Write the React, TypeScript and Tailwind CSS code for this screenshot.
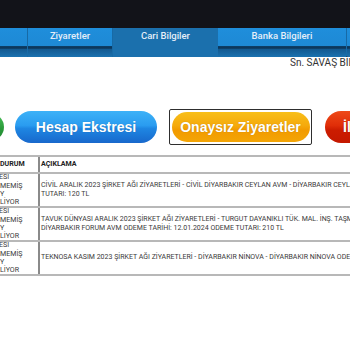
import React from "react";

const tabBg =
  "bg-[linear-gradient(to_bottom,#1f8edb_0%,#1e89d5_62%,#0b3457_64%,#0d3a60_70%,#135a91_74%,#1a72b0_100%)]";

function Tab({ w, label }: { w: string; label?: string }) {
  return (
    <div className={`${w} ${tabBg} shrink-0 border-r border-[#176aa6] flex justify-center`}>
      {label && (
        <span className="pt-[2px] text-[9.5px] leading-[11px] font-medium text-[#e4eef8]">{label}</span>
      )}
    </div>
  );
}

function Status() {
  return (
    <div className="w-[40px] shrink-0 border-r-2 border-[#8a8a8a] overflow-hidden flex flex-col justify-center text-[7.1px] leading-[8.4px] text-[#3a3a3a] whitespace-nowrap">
      <div className="-ml-[1px]">ESİ</div>
      <div>MEMİŞ</div>
      <div>Y</div>
      <div>LİYOR</div>
    </div>
  );
}

function Row({ lines }: { lines: string[] }) {
  return (
    <div className="flex h-[34px] border-b-2 border-[#b8b8b8]">
      <Status />
      <div className="flex flex-col justify-center pl-[1px] text-[7px] leading-[9.5px] text-[#3a3a3a] whitespace-nowrap">
        {lines.map((l, i) => (
          <div key={i}>{l}</div>
        ))}
      </div>
    </div>
  );
}

export default function App() {
  const btnText = "font-['Liberation_Sans',Arial,sans-serif] font-bold text-[14px] text-white [text-shadow:0_0_1px_rgba(0,0,0,0.25)]";
  return (
    <div className="w-[350px] h-[350px] overflow-hidden bg-white font-['Roboto',sans-serif]">
      <div className="h-[28px] bg-[#121319]" />
      <div className="flex h-[29px] overflow-hidden">
        <Tab w="w-[28px]" />
        <Tab w="w-[85px]" label="Ziyaretler" />
        <div className="w-[105px] shrink-0 bg-[#1b70ad] flex justify-center">
          <span className="pt-[2px] text-[9.5px] leading-[11px] font-medium text-[#e4eef8]">Cari Bilgiler</span>
        </div>
        <Tab w="w-[129px]" label="Banka Bilgileri" />
        <Tab w="w-[40px]" />
      </div>
      <div className="pl-[290px] whitespace-nowrap text-[10px] leading-[12px] text-[#333]">
        Sn. SAVAŞ BİLGİN
      </div>
      <div className="flex items-center h-[36px] mt-[40px] whitespace-nowrap">
        <div className="-ml-[136px] w-[140px] h-[28px] shrink-0 rounded-full bg-[linear-gradient(to_bottom,#4cc35a_0%,#2a9a3a_55%,#1f8530_100%)]" />
        <div
          className={`ml-[11px] w-[142px] h-[32px] shrink-0 rounded-full flex items-center justify-center bg-[linear-gradient(to_bottom,#3db2f7_0%,#2a9cf0_45%,#1e86e2_55%,#1868cc_100%)] ${btnText}`}
        >
          Hesap Ekstresi
        </div>
        <div className="ml-[12px] w-[143px] h-[36px] shrink-0 border-[1.5px] border-[#2e2e2e] rounded-[2px] flex items-center justify-center">
          <div
            className={`w-[138px] h-[30px] rounded-full flex items-center justify-center bg-[linear-gradient(to_bottom,#f8bf1a_0%,#f5aa0c_45%,#f29b00_60%,#f3a506_100%)] ${btnText} text-[#fff2d6]`}
          >
            Onaysız Ziyaretler
          </div>
        </div>
        <div
          className={`ml-[13px] w-[142px] h-[32px] shrink-0 rounded-full flex items-center pl-[18px] bg-[linear-gradient(to_bottom,#ee4a18_0%,#e02e08_45%,#cc1c00_60%,#c41800_100%)] ${btnText}`}
        >
          İletişim
        </div>
      </div>
      <div className="mt-[10px] w-[350px] overflow-hidden border-t-2 border-[#b8b8b8]">
        <div className="flex h-[17px] border-b-2 border-[#b8b8b8]">
          <div className="w-[40px] shrink-0 border-r-2 border-[#8a8a8a] flex items-center text-[7.1px] font-bold text-[#222] whitespace-nowrap">
            DURUM
          </div>
          <div className="flex items-center pl-[1px] text-[7.1px] font-bold text-[#222]">AÇIKLAMA</div>
        </div>
        <Row
          lines={[
            "CİVİL ARALIK 2023 ŞİRKET AĞI ZİYARETLERİ - CİVİL DİYARBAKIR CEYLAN AVM - DİYARBAKIR CEYLAN AVM ODEME TARİHİ: 12.01.2024 ODEME",
            "TUTARI: 120 TL",
          ]}
        />
        <Row
          lines={[
            "TAVUK DÜNYASI ARALIK 2023 ŞİRKET AĞI ZİYARETLERİ - TURGUT DAYANIKLI TÜK. MAL. İNŞ. TAŞMACILIK",
            "DİYARBAKIR FORUM AVM ODEME TARİHİ: 12.01.2024 ODEME TUTARI: 210 TL",
          ]}
        />
        <Row
          lines={[
            "TEKNOSA KASIM 2023 ŞİRKET AĞI ZİYARETLERİ - DİYARBAKIR NİNOVA - DİYARBAKIR NİNOVA ODEME TARİHİ: 12.01.2024 ODEME TUTARI: 100 TL",
          ]}
        />
      </div>
    </div>
  );
}
